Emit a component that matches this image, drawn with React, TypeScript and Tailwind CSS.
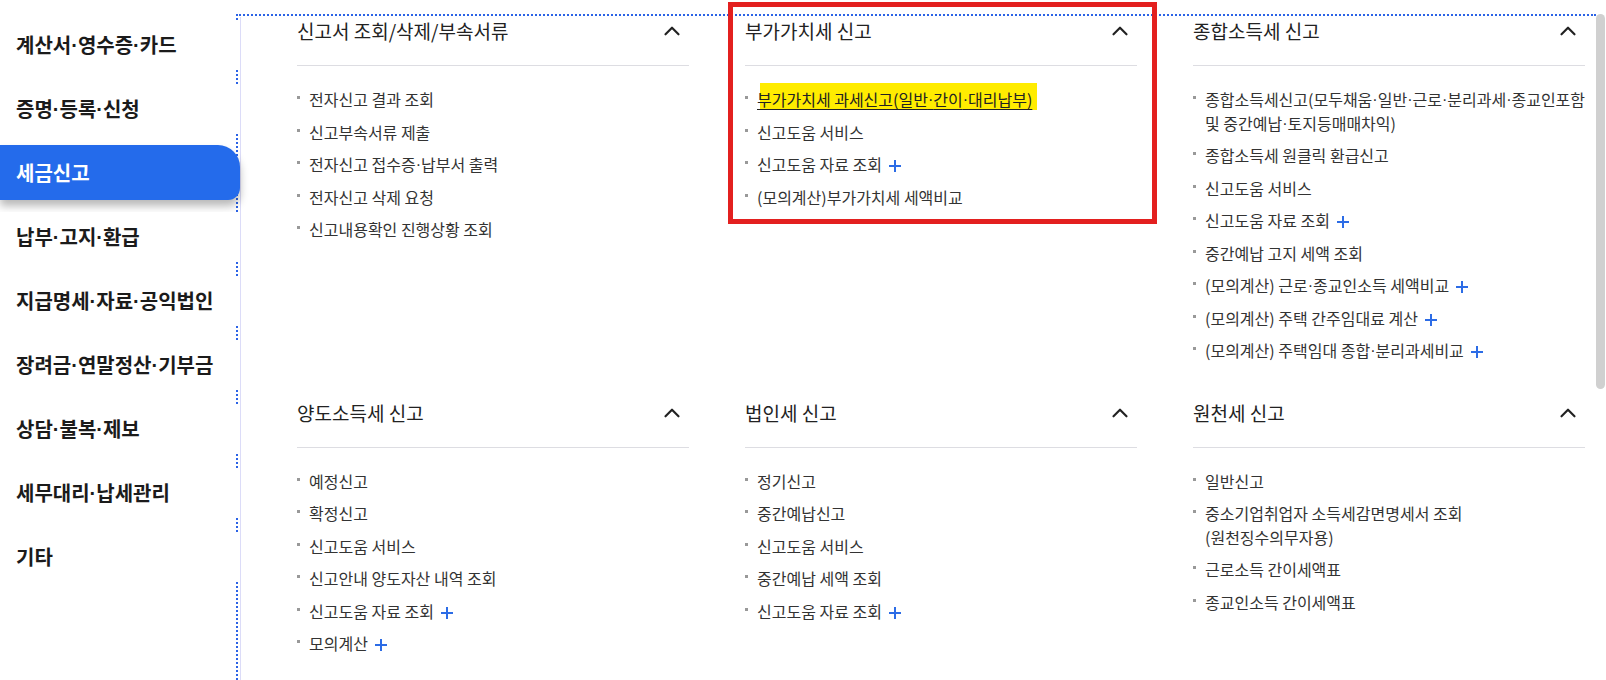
import { ChevronUp } from 'lucide-react';

type Item = {
  text: string;
  line2?: string;
  plus?: boolean;
  highlight?: boolean;
};

type Section = {
  title: string;
  items: Item[];
};

const menu = [
  '계산서·영수증·카드',
  '증명·등록·신청',
  '세금신고',
  '납부·고지·환급',
  '지급명세·자료·공익법인',
  '장려금·연말정산·기부금',
  '상담·불복·제보',
  '세무대리·납세관리',
  '기타',
];

const sections: Section[] = [
  {
    title: '신고서 조회/삭제/부속서류',
    items: [
      { text: '전자신고 결과 조회' },
      { text: '신고부속서류 제출' },
      { text: '전자신고 접수증·납부서 출력' },
      { text: '전자신고 삭제 요청' },
      { text: '신고내용확인 진행상황 조회' },
    ],
  },
  {
    title: '부가가치세 신고',
    items: [
      { text: '부가가치세 과세신고(일반·간이·대리납부)', highlight: true },
      { text: '신고도움 서비스' },
      { text: '신고도움 자료 조회', plus: true },
      { text: '(모의계산)부가가치세 세액비교' },
    ],
  },
  {
    title: '종합소득세 신고',
    items: [
      {
        text: '종합소득세신고(모두채움·일반·근로·분리과세·종교인포함',
        line2: '및 중간예납·토지등매매차익)',
      },
      { text: '종합소득세 원클릭 환급신고' },
      { text: '신고도움 서비스' },
      { text: '신고도움 자료 조회', plus: true },
      { text: '중간예납 고지 세액 조회' },
      { text: '(모의계산) 근로·종교인소득 세액비교', plus: true },
      { text: '(모의계산) 주택 간주임대료 계산', plus: true },
      { text: '(모의계산) 주택임대 종합·분리과세비교', plus: true },
    ],
  },
  {
    title: '양도소득세 신고',
    items: [
      { text: '예정신고' },
      { text: '확정신고' },
      { text: '신고도움 서비스' },
      { text: '신고안내 양도자산 내역 조회' },
      { text: '신고도움 자료 조회', plus: true },
      { text: '모의계산', plus: true },
    ],
  },
  {
    title: '법인세 신고',
    items: [
      { text: '정기신고' },
      { text: '중간예납신고' },
      { text: '신고도움 서비스' },
      { text: '중간예납 세액 조회' },
      { text: '신고도움 자료 조회', plus: true },
    ],
  },
  {
    title: '원천세 신고',
    items: [
      { text: '일반신고' },
      { text: '중소기업취업자 소득세감면명세서 조회', line2: '(원천징수의무자용)' },
      { text: '근로소득 간이세액표' },
      { text: '종교인소득 간이세액표' },
    ],
  },
];

// the CJK font draws "·" full width; the page uses a narrow one
function Dotted({ text }: { text: string }) {
  const parts = text.split('·');
  return (
    <>
      {parts.map((p, i) => (
        <span key={i}>
          {i > 0 && <span className="relative -top-[0.04em] font-['Liberation_Sans',sans-serif] leading-none">·</span>}
          {p}
        </span>
      ))}
    </>
  );
}

function PlusIcon() {
  return (
    <svg width="12" height="12" viewBox="0 0 12 12" className="ml-[7px] inline-block align-[-1px]">
      <path d="M6 0v12M0 6h12" stroke="#2c6ce6" strokeWidth="2" fill="none" />
    </svg>
  );
}

function MenuSection({ section }: { section: Section }) {
  return (
    <section className="pl-[56px]">
      <div className="flex h-[28px] items-center justify-between">
        <h3 className="text-[19px] leading-[28px] text-[#222]">{section.title}</h3>
        <ChevronUp size={26} strokeWidth={2} className="mr-[4px] text-[#222]" />
      </div>
      <div className="mt-[20px] h-px bg-[#dddde2]" />
      <ul className="space-y-[9px] pt-[22px]">
        {section.items.map((item) => (
          <li key={item.text} className="flex text-[16px] leading-[23.5px] text-[#333]">
            <span className="mr-[9px] mt-[8px] h-[3px] w-[3px] shrink-0 bg-[#999]" />
            <span className="whitespace-nowrap">
              {item.highlight ? (
                <span className="relative inline-block">
                  <span className="absolute -top-[5px] bottom-[2px] left-[3px] -right-[5px] bg-[#ffec00]" />
                  <span className="relative text-[#222] underline underline-offset-[3px]">
                    <Dotted text={item.text} />
                  </span>
                </span>
              ) : (
                <Dotted text={item.text} />
              )}
              {item.line2 && (
                <>
                  <br />
                  <Dotted text={item.line2} />
                </>
              )}
              {item.plus && <PlusIcon />}
            </span>
          </li>
        ))}
      </ul>
    </section>
  );
}

export default function App() {
  return (
    <div className="relative flex h-[680px] w-[1606px] overflow-hidden bg-white font-['Noto_Sans_CJK_KR','Noto_Sans',sans-serif]">
      <nav className="w-[236px] shrink-0 pt-[20px]">
        {menu.map((label) =>
          label === '세금신고' ? (
            <div
              key={label}
              className="relative z-10 -mt-[3px] mb-[12px] flex h-[55px] w-[240px] items-center rounded-tr-[22px] rounded-br-[12px] bg-[#246beb] pl-4 text-[20px] font-bold text-white shadow-[0_6px_8px_rgba(0,0,0,0.28)]"
            >
              <Dotted text={label} />
            </div>
          ) : (
            <div
              key={label}
              className="relative z-10 mb-[14px] flex h-[50px] w-[238px] items-center bg-white pl-4 text-[20px] font-bold text-[#1b1b1b]"
            >
              <span>
                <Dotted text={label} />
              </span>
            </div>
          )
        )}
      </nav>

      <main className="mt-[14px] flex-1 border-l-2 border-t-2 border-dotted border-[#2b63e6]">
        <div className="ml-[2px] mt-[1px] h-full border-l border-[#dcdcf8]">
          <div className="grid grid-cols-[repeat(3,448px)] gap-y-[36px]">
            {sections.map((s) => (
              <MenuSection key={s.title} section={s} />
            ))}
          </div>
        </div>
      </main>

      <div className="w-[10px] shrink-0 pt-[14px]">
        <div className="h-[375px] w-[9px] rounded-full bg-[#d0d0d0]" />
      </div>

      <div className="pointer-events-none absolute left-[728px] top-[2px] h-[222px] w-[429px] border-[5px] border-[#e3201f]" />
    </div>
  );
}
